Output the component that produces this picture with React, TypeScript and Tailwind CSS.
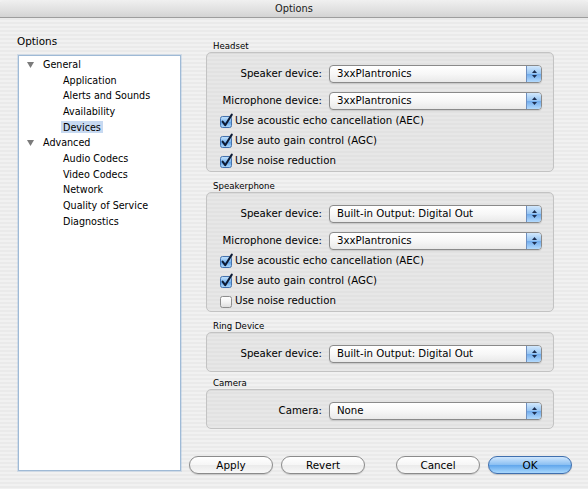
import React from "react";

function Popup({ value }: { value: string }) {
  return (
    <div className="flex h-[18px] w-[213px] items-stretch rounded-[4px] border border-[#8a8a8a] bg-[linear-gradient(180deg,#ffffff_0%,#f7f7f7_50%,#e9e9e9_100%)] shadow-[0_1px_1px_rgba(0,0,0,0.12)]">
      <span className="flex flex-1 items-center pl-[7px] text-[10.2px] leading-none text-black">{value}</span>
      <div className="flex w-[15px] flex-col items-center justify-center gap-[2px] rounded-r-[3px] border-l border-[#6f8fbf] bg-[linear-gradient(180deg,#d2e8fd_0%,#98c6f3_48%,#72acec_52%,#b3dafd_100%)]">
        <svg width="5" height="3" viewBox="0 0 5 3">
          <path d="M0 3 L2.5 0 L5 3 Z" fill="#1c2f52" />
        </svg>
        <svg width="5" height="3" viewBox="0 0 5 3">
          <path d="M0 0 L2.5 3 L5 0 Z" fill="#1c2f52" />
        </svg>
      </div>
    </div>
  );
}

function CheckBox({ checked }: { checked: boolean }) {
  return (
    <svg width="14" height="14" viewBox="0 0 14 14" className="overflow-visible">
      <defs>
        <linearGradient id="cbBlue" x1="0" y1="0" x2="0" y2="1">
          <stop offset="0" stopColor="#c6e3fc" />
          <stop offset="0.5" stopColor="#7ab6ef" />
          <stop offset="0.5" stopColor="#5a9fe8" />
          <stop offset="1" stopColor="#b2dcfc" />
        </linearGradient>
        <linearGradient id="cbWhite" x1="0" y1="0" x2="0" y2="1">
          <stop offset="0" stopColor="#ffffff" />
          <stop offset="0.5" stopColor="#f3f3f3" />
          <stop offset="1" stopColor="#dcdcdc" />
        </linearGradient>
      </defs>
      <rect
        x="0.5"
        y="2.5"
        width="11"
        height="11"
        rx="2"
        fill={checked ? "url(#cbBlue)" : "url(#cbWhite)"}
        stroke={checked ? "#4472ad" : "#8d8d8d"}
      />
      {checked && (
        <path
          d="M2.6 7.6 L5.2 11.2 L11.8 0.6"
          fill="none"
          stroke="#0d1b34"
          strokeWidth="2"
          strokeLinecap="round"
          strokeLinejoin="round"
        />
      )}
    </svg>
  );
}

function LabeledPopup({ label, value }: { label: string; value: string }) {
  return (
    <div className="flex h-[18px] items-center">
      <span className="w-[115px] text-right text-[10.2px] leading-none text-black">{label}</span>
      <div className="ml-[7px]">
        <Popup value={value} />
      </div>
    </div>
  );
}

function CheckRow({ label, checked }: { label: string; checked: boolean }) {
  return (
    <div className="flex h-[20px] items-center pl-[13px]">
      <CheckBox checked={checked} />
      <span className="ml-[1px] text-[10.2px] leading-none text-black">{label}</span>
    </div>
  );
}

function GroupTitle({ children }: { children: React.ReactNode }) {
  return (
    <div className="flex h-[12px] items-center pl-[24px] text-[8.6px] leading-none text-black">{children}</div>
  );
}

const boxCls =
  "w-[348px] rounded-[5px] border border-[#c3c3c3] bg-[repeating-linear-gradient(180deg,#e7e7e7_0px,#e7e7e7_2px,#e2e2e2_2px,#e2e2e2_4px)] shadow-[inset_0_1px_1px_rgba(0,0,0,0.06)]";

function TreeHeader({ label }: { label: string }) {
  return (
    <div className="flex h-[15.67px] items-center pl-[8px]">
      <svg width="7" height="6" viewBox="0 0 7 6">
        <path d="M0 0 L7 0 L3.5 6 Z" fill="#7b7b7b" />
      </svg>
      <span className="ml-[9px] text-[9.6px] leading-none text-black">{label}</span>
    </div>
  );
}

function TreeItem({ label, selected }: { label: string; selected?: boolean }) {
  return (
    <div className="flex h-[15.67px] items-center pl-[42px]">
      <span
        className={
          selected
            ? "flex h-[12px] items-center bg-[#c7d9f1] px-[2px] text-[9.6px] leading-none text-black"
            : "flex h-[12px] items-center px-[2px] text-[9.6px] leading-none text-black"
        }
      >
        {label}
      </span>
    </div>
  );
}

function Button({ label, primary }: { label: string; primary?: boolean }) {
  return (
    <div
      className={
        primary
          ? "flex h-[18px] w-[84px] items-center justify-center rounded-full border border-[#3f6fae] bg-[linear-gradient(180deg,#cfe6fd_0%,#8cc0f2_48%,#62a7ec_52%,#a9d8fd_100%)] text-[10.4px] leading-none text-black shadow-[0_1px_1px_rgba(0,0,0,0.18)]"
          : "flex h-[18px] w-[84px] items-center justify-center rounded-full border border-[#8b8b8b] bg-[linear-gradient(180deg,#ffffff_0%,#f6f6f6_48%,#ebebeb_52%,#f8f8f8_100%)] text-[10.4px] leading-none text-black shadow-[0_1px_1px_rgba(0,0,0,0.15)]"
      }
    >
      {label}
    </div>
  );
}

export default function App() {
  return (
    <div className="flex h-[489px] w-[588px] flex-col overflow-hidden font-['DejaVu_Sans',sans-serif] bg-[repeating-linear-gradient(180deg,#f1f1f1_0px,#f1f1f1_2px,#eaeaea_2px,#eaeaea_4px)]">
      {/* Title bar */}
      <div className="flex h-[18px] items-center justify-center rounded-t-[5px] border-b border-[#9d9d9d] bg-[linear-gradient(180deg,#f0f0f0_0%,#e0e0e0_60%,#d3d3d3_100%)]">
        <span className="text-[9.8px] leading-none text-[#1a1a1a]">Options</span>
      </div>

      <div className="flex flex-1">
        {/* Left column */}
        <div className="w-[189px] pt-[17px]">
          <div className="flex h-[13px] items-center pl-[17px] text-[10.4px] leading-none text-black">Options</div>
          <div className="ml-[18px] mt-[7px] h-[416px] w-[163px] border border-[#9fbad6] bg-white pt-[1px] shadow-[0_0_0_1px_rgba(160,190,220,0.35)]">
            <TreeHeader label="General" />
            <TreeItem label="Application" />
            <TreeItem label="Alerts and Sounds" />
            <TreeItem label="Availability" />
            <TreeItem label="Devices" selected />
            <TreeHeader label="Advanced" />
            <TreeItem label="Audio Codecs" />
            <TreeItem label="Video Codecs" />
            <TreeItem label="Network" />
            <TreeItem label="Quality of Service" />
            <TreeItem label="Diagnostics" />
          </div>
        </div>

        {/* Right column */}
        <div className="flex flex-col pt-[22px]">
          <GroupTitle>Headset</GroupTitle>
          <div className={"ml-[17px] pt-[12px] " + boxCls}>
            <LabeledPopup label="Speaker device:" value="3xxPlantronics" />
            <div className="mt-[9px]">
              <LabeledPopup label="Microphone device:" value="3xxPlantronics" />
            </div>
            <div className="mt-[1px]">
              <CheckRow label="Use acoustic echo cancellation (AEC)" checked />
              <CheckRow label="Use auto gain control (AGC)" checked />
              <CheckRow label="Use noise reduction" checked />
            </div>
          </div>

          <div className="mt-[8px]">
            <GroupTitle>Speakerphone</GroupTitle>
          </div>
          <div className={"ml-[17px] pt-[12px] " + boxCls}>
            <LabeledPopup label="Speaker device:" value="Built-in Output: Digital Out" />
            <div className="mt-[9px]">
              <LabeledPopup label="Microphone device:" value="3xxPlantronics" />
            </div>
            <div className="mt-[1px]">
              <CheckRow label="Use acoustic echo cancellation (AEC)" checked />
              <CheckRow label="Use auto gain control (AGC)" checked />
              <CheckRow label="Use noise reduction" checked={false} />
            </div>
          </div>

          <div className="mt-[8px]">
            <GroupTitle>Ring Device</GroupTitle>
          </div>
          <div className={"ml-[17px] pb-[8px] pt-[12px] " + boxCls}>
            <LabeledPopup label="Speaker device:" value="Built-in Output: Digital Out" />
          </div>

          <div className="mt-[5px]">
            <GroupTitle>Camera</GroupTitle>
          </div>
          <div className={"ml-[17px] pb-[8px] pt-[12px] " + boxCls}>
            <LabeledPopup label="Camera:" value="None" />
          </div>

          <div className="mt-[27px] flex items-center">
            <Button label="Apply" />
            <div className="ml-[8px]">
              <Button label="Revert" />
            </div>
            <div className="ml-[31px]">
              <Button label="Cancel" />
            </div>
            <div className="ml-[8px]">
              <Button label="OK" primary />
            </div>
          </div>
        </div>
      </div>
    </div>
  );
}
